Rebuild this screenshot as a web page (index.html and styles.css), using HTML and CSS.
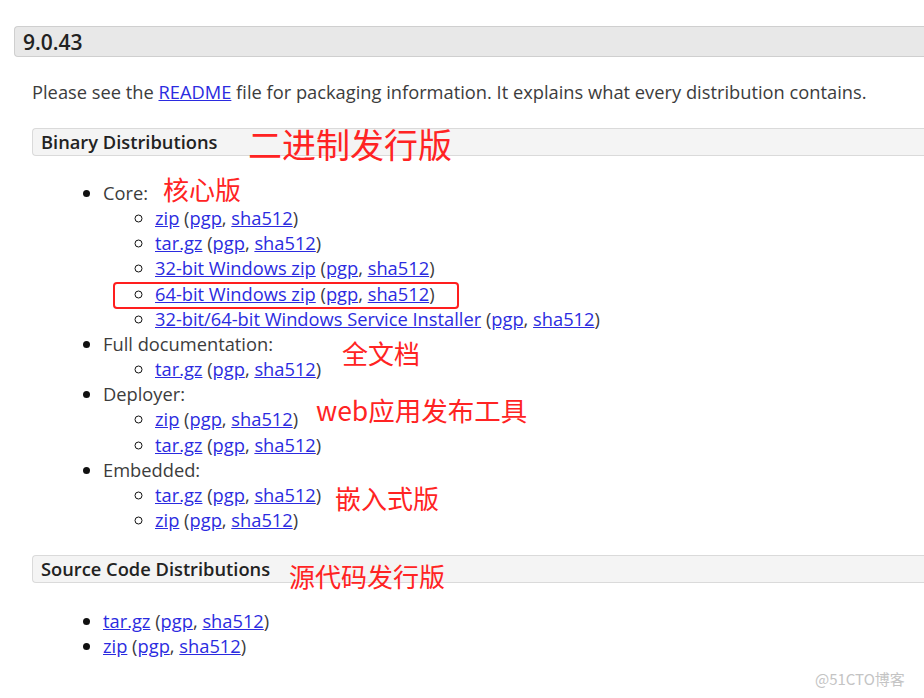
FILE: index.html
```html
<!DOCTYPE html>
<html lang="en">
<head>
    <meta charset="UTF-8">
    <title>Apache Tomcat 9.0.43</title>
    <link rel="stylesheet" href="styles.css">
</head>
<body>

    <div class="page">
        <h3 class="version">9.0.43</h3>

        <div class="content">
            <p class="intro">Please see the <a href="#">README</a> file for packaging information. It explains what every distribution contains.</p>

            <h4 class="dist-title">Binary Distributions</h4>
            <ul class="dist-list">
                <li>Core:
                    <ul>
                        <li><a href="#">zip</a> (<a href="#">pgp</a>, <a href="#">sha512</a>)</li>
                        <li><a href="#">tar.gz</a> (<a href="#">pgp</a>, <a href="#">sha512</a>)</li>
                        <li><a href="#">32-bit Windows zip</a> (<a href="#">pgp</a>, <a href="#">sha512</a>)</li>
                        <li><a href="#">64-bit Windows zip</a> (<a href="#">pgp</a>, <a href="#">sha512</a>)</li>
                        <li><a href="#">32-bit/64-bit Windows Service Installer</a> (<a href="#">pgp</a>, <a href="#">sha512</a>)</li>
                    </ul>
                </li>
                <li>Full documentation:
                    <ul>
                        <li><a href="#">tar.gz</a> (<a href="#">pgp</a>, <a href="#">sha512</a>)</li>
                    </ul>
                </li>
                <li>Deployer:
                    <ul>
                        <li><a href="#">zip</a> (<a href="#">pgp</a>, <a href="#">sha512</a>)</li>
                        <li><a href="#">tar.gz</a> (<a href="#">pgp</a>, <a href="#">sha512</a>)</li>
                    </ul>
                </li>
                <li>Embedded:
                    <ul>
                        <li><a href="#">tar.gz</a> (<a href="#">pgp</a>, <a href="#">sha512</a>)</li>
                        <li><a href="#">zip</a> (<a href="#">pgp</a>, <a href="#">sha512</a>)</li>
                    </ul>
                </li>
            </ul>

            <h4 class="dist-title">Source Code Distributions</h4>
            <ul class="dist-list source-list">
                <li><a href="#">tar.gz</a> (<a href="#">pgp</a>, <a href="#">sha512</a>)</li>
                <li><a href="#">zip</a> (<a href="#">pgp</a>, <a href="#">sha512</a>)</li>
            </ul>
        </div>

        <!-- red notes drawn over the screenshot -->
        <span class="note note-binary">二进制发行版</span>
        <span class="note note-core">核心版</span>
        <span class="note note-docs">全文档</span>
        <span class="note note-deployer">web应用发布工具</span>
        <span class="note note-embedded">嵌入式版</span>
        <span class="note note-source">源代码发行版</span>
        <div class="highlight"></div>

        <span class="watermark">@51CTO博客</span>
    </div>

</body>
</html>
```

FILE: styles.css
```css
html, body {
    margin: 0;
    height: 100%;
    overflow: hidden;
}
body {
    font-family: "Open Sans", "Noto Sans", sans-serif;
    color: #3c3c3c;
    background-color: #fff;
}
.page {
    position: relative;
    height: 100%;
    padding: 26px 0 0 14px;
    box-sizing: border-box;
}
a {
    color: #2b2be0;
    text-decoration: underline;
}

.version {
    margin: 0;
    height: 31px;
    line-height: 31px;
    padding-left: 8px;
    font-size: 21px;
    font-weight: 600;
    color: #222;
    background-color: #e8e8e8;
    border: 1px solid #cfcfcf;
    border-right: none;
    border-radius: 4px 0 0 4px;
    box-sizing: border-box;
}
.content {
    padding-left: 18px;
}
.intro {
    margin: 22px 0 24px;
    font-size: 18.3px;
    line-height: 25px;
}
.dist-title {
    margin: 0;
    height: 28px;
    line-height: 26px;
    padding-left: 8px;
    font-size: 18.3px;
    font-weight: 600;
    color: #222;
    background-color: #f4f4f4;
    border: 1px solid #dadada;
    border-right: none;
    border-radius: 4px 0 0 4px;
    box-sizing: border-box;
}
.dist-list {
    margin: 24px 0 23px;
    padding-left: 71px;
    font-size: 18.3px;
    line-height: 25.15px;
}
.source-list {
    margin-top: 25px;
}
.dist-list ul {
    margin: 0;
    padding-left: 52px;
    list-style-type: circle;
}
.dist-list li::marker {
    color: #111;
}

.note {
    position: absolute;
    font-family: "Noto Sans CJK SC", sans-serif;
    color: #ff2323;
    white-space: nowrap;
    line-height: 1;
}
.note-binary {
    left: 248px;
    top: 127px;
    font-size: 34px;
}
.note-core {
    left: 163px;
    top: 176px;
    font-size: 26px;
}
.note-docs {
    left: 342px;
    top: 340px;
    font-size: 26px;
}
.note-deployer {
    left: 316px;
    top: 397px;
    font-size: 26.5px;
}
.note-embedded {
    left: 335px;
    top: 485px;
    font-size: 26px;
}
.note-source {
    left: 289px;
    top: 563px;
    font-size: 26px;
}
.highlight {
    position: absolute;
    left: 113px;
    top: 282px;
    width: 346px;
    height: 27px;
    border: 2px solid #ff1e1e;
    border-radius: 4px;
    box-sizing: border-box;
}
.watermark {
    position: absolute;
    left: 815px;
    top: 668px;
    font-family: "Noto Sans CJK SC", sans-serif;
    font-size: 15px;
    color: #c4c4c4;
}
```
